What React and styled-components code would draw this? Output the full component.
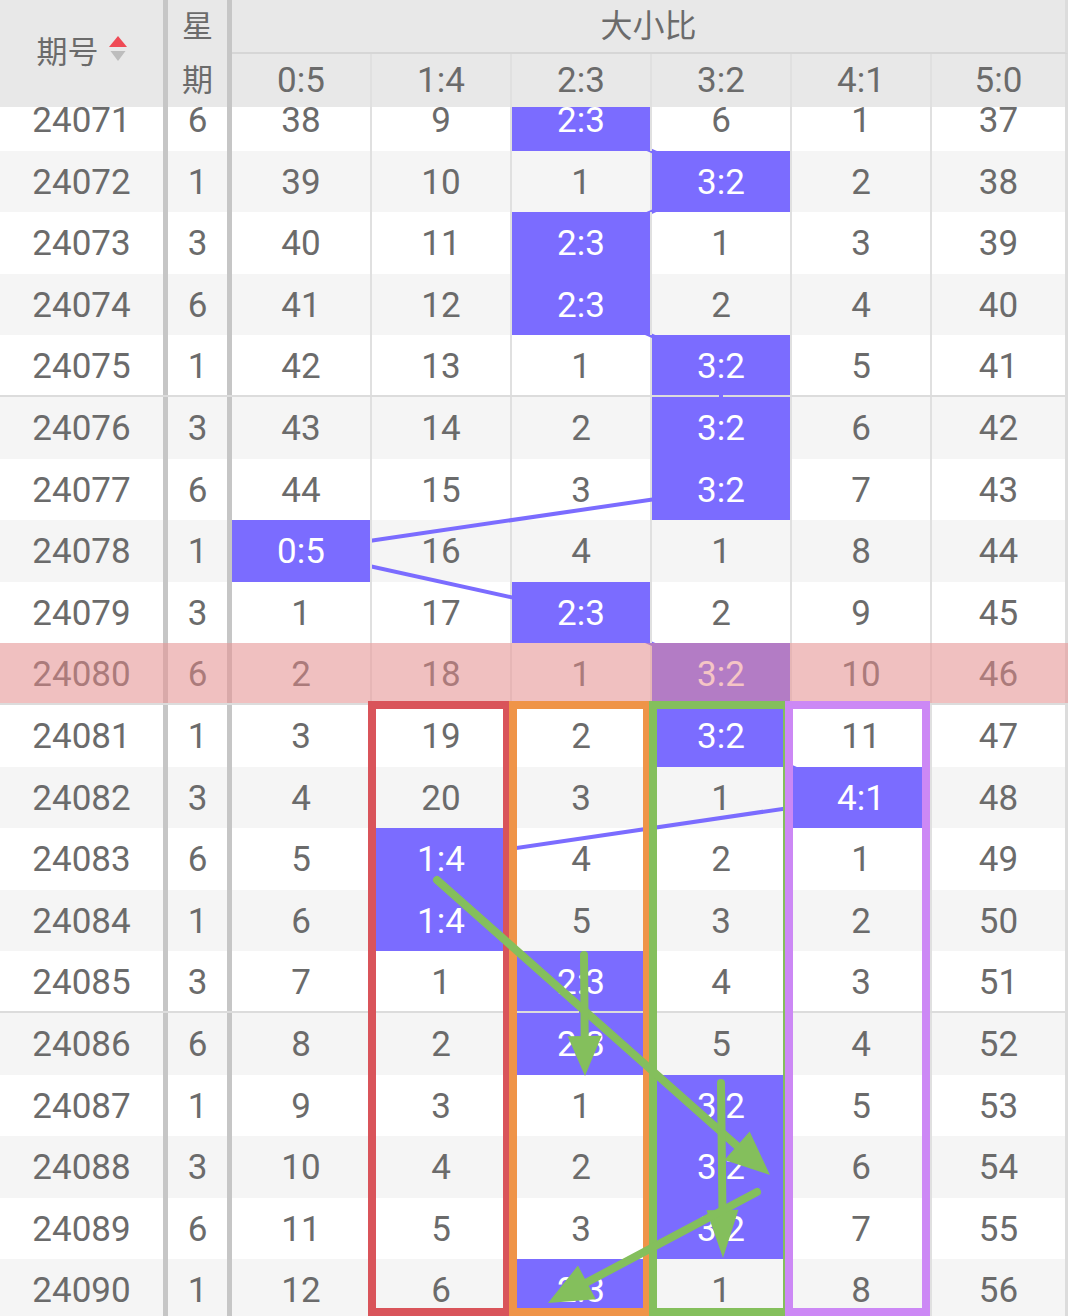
import React, { useLayoutEffect, useRef } from "react";
import styled, { createGlobalStyle, css } from "styled-components";

const GlobalStyle = createGlobalStyle`
  html, body { margin: 0; padding: 0; background: #fff; }
`;

const COLS = "168px 64px repeat(5, 140px) 136px";
const ROW_H = 61.6;
const PURPLE = "#7b6cff";
const RATIOS = ["0:5", "1:4", "2:3", "3:2", "4:1", "5:0"];

// omission counts before 24071
const START = [37, 8, 0, 5, 0, 36];
// [issue, weekday, hit column]
const DRAWS = [
  [24071, 6, 2], [24072, 1, 3], [24073, 3, 2], [24074, 6, 2], [24075, 1, 3],
  [24076, 3, 3], [24077, 6, 3], [24078, 1, 0], [24079, 3, 2], [24080, 6, 3],
  [24081, 1, 3], [24082, 3, 4], [24083, 6, 1], [24084, 1, 1], [24085, 3, 2],
  [24086, 6, 2], [24087, 1, 3], [24088, 3, 3], [24089, 6, 3], [24090, 1, 2],
];
const CURRENT = 24080;

const rows = (() => {
  let miss = [...START];
  return DRAWS.map(([no, wk, hit]) => {
    miss = miss.map((m, i) => (i === hit ? 0 : m + 1));
    return { no, wk, hit, miss };
  });
})();

const edge = (p) =>
  p.$edge === "thick" ? "5px solid #c6c6c6" : p.$edge === "last" ? "3px solid #dcdcdc" : "2px solid #e0e0e0";

const Page = styled.div`
  position: relative;
  width: 1068px;
  height: 1316px;
  overflow: hidden;
  background: #fff;
  font-family: Roboto, "Noto Sans CJK SC", sans-serif;
  color: #6b6b6b;
`;

const Scroller = styled.div`
  height: 100%;
  overflow: hidden;
`;

const Header = styled.div`
  position: sticky;
  top: 0;
  z-index: 5;
  display: grid;
  grid-template-columns: ${COLS};
  grid-template-rows: 54px 53px;
  background: #e8e8e8;
`;

const HeadCell = styled.div`
  display: flex;
  align-items: center;
  justify-content: center;
  box-sizing: border-box;
  font-size: 35px;
  border-right: ${edge};
`;

const IssueHead = styled(HeadCell)`
  grid-row: 1 / span 2;
  font-size: 31px;
  gap: 10px;
  padding-bottom: 8px;
`;

const WeekHead = styled(HeadCell)`
  grid-row: 1 / span 2;
  flex-direction: column;
  justify-content: flex-start;
  font-size: 31px;
  span {
    display: flex;
    align-items: center;
  }
  span:first-child {
    height: 48px;
  }
  span:last-child {
    height: 60px;
  }
`;

const GroupHead = styled(HeadCell)`
  grid-column: 3 / span 6;
  font-size: 32px;
  padding-bottom: 7px;
  border-bottom: 2px solid #d6d6d6;
`;

const SortIcon = styled.svg`
  display: block;
  margin-top: -2px;
`;

const Body = styled.div`
  position: relative;
  isolation: isolate;
`;

const Row = styled.div`
  position: relative;
  display: grid;
  grid-template-columns: ${COLS};
  height: ${ROW_H}px;
  box-sizing: border-box;
  background: ${(p) => (p.$alt ? "#f5f5f5" : "#fff")};
  ${(p) => p.$group && css`border-bottom: 2px solid #dcdcdc;`}
  ${(p) =>
    p.$current &&
    css`
      &::after {
        content: "";
        position: absolute;
        inset: 0;
        background: rgba(235, 139, 139, 0.5);
        z-index: 3;
        pointer-events: none;
      }
    `}
`;

const Cell = styled.div`
  display: flex;
  align-items: center;
  justify-content: center;
  box-sizing: border-box;
  padding-top: 2px;
  font-size: 35px;
  border-right: ${edge};
  ${(p) =>
    p.$hit &&
    css`
      position: relative;
      z-index: 2;
      background: ${PURPLE};
      color: #fff;
    `}
`;

const Links = styled.svg`
  position: absolute;
  top: 0;
  left: 0;
  z-index: 1;
  pointer-events: none;
`;

const Marks = styled.svg`
  position: absolute;
  top: 0;
  left: 0;
  z-index: 10;
  pointer-events: none;
`;

const colX = (i) => 301 + 140 * i;
const rowY = (r) => r * ROW_H + ROW_H / 2;

const GREEN = "#84bf5c";
const boxes = [
  { color: "#d9545a", l: 368, r: 511 },
  { color: "#ef9448", l: 509, r: 651 },
  { color: "#84bf5c", l: 649, r: 791 },
  { color: "#cc88f5", l: 785, r: 930 },
];

const arrow = (x1, y1, x2, y2, len, half) => {
  const dx = x2 - x1;
  const dy = y2 - y1;
  const d = Math.hypot(dx, dy);
  const ux = dx / d;
  const uy = dy / d;
  const bx = x2 - ux * len;
  const by = y2 - uy * len;
  return {
    line: [x1, y1, bx + ux * 2, by + uy * 2],
    head: `${x2},${y2} ${bx - uy * half},${by + ux * half} ${bx + uy * half},${by - ux * half}`,
  };
};

const arrows = [
  arrow(437, 880, 770, 1175, 44, 19),
  arrow(584, 955, 585, 1076, 40, 17),
  arrow(721, 1083, 723, 1258, 48, 16),
  arrow(757, 1192, 548, 1303, 44, 19),
];

export default function App() {
  const ref = useRef(null);
  useLayoutEffect(() => {
    if (ref.current) ref.current.scrollTop = 18;
  }, []);

  return (
    <Page>
      <GlobalStyle />
      <Scroller ref={ref}>
        <Header>
          <IssueHead $edge="thick">
            期号
            <SortIcon width="18" height="28" viewBox="0 0 18 28">
              <polygon points="9,1 18,12 0,12" fill="#ef4a55" />
              <polygon points="1.5,16 16.5,16 9,26" fill="#bdbdbd" />
            </SortIcon>
          </IssueHead>
          <WeekHead $edge="thick">
            <span>星</span>
            <span>期</span>
          </WeekHead>
          <GroupHead $edge="last">大小比</GroupHead>
          {RATIOS.map((r, i) => (
            <HeadCell key={r} $edge={i === 5 ? "last" : undefined}>
              {r}
            </HeadCell>
          ))}
        </Header>

        <Body>
          <Links width="1068" height={rows.length * ROW_H}>
            {rows.slice(1).map((row, i) => (
              <line
                key={row.no}
                x1={colX(rows[i].hit)}
                y1={rowY(i)}
                x2={colX(row.hit)}
                y2={rowY(i + 1)}
                stroke={PURPLE}
                strokeWidth="4"
              />
            ))}
          </Links>
          {rows.map((row, i) => (
            <Row key={row.no} $alt={i % 2 === 1} $group={i % 5 === 4} $current={row.no === CURRENT}>
              <Cell $edge="thick">{row.no}</Cell>
              <Cell $edge="thick">{row.wk}</Cell>
              {row.miss.map((m, c) => (
                <Cell key={c} $hit={c === row.hit} $edge={c === 5 ? "last" : undefined}>
                  {c === row.hit ? RATIOS[c] : m}
                </Cell>
              ))}
            </Row>
          ))}
        </Body>
      </Scroller>

      <Marks width="1068" height="1316" viewBox="0 0 1068 1316">
        {boxes.map((b) => (
          <rect
            key={b.color}
            x={b.l + 4}
            y={705}
            width={b.r - b.l - 8}
            height={1316 - 4 - 705}
            fill="none"
            stroke={b.color}
            strokeWidth="8"
          />
        ))}
        {arrows.map((a, i) => (
          <g key={i} fill={GREEN} stroke={GREEN}>
            <line
              x1={a.line[0]}
              y1={a.line[1]}
              x2={a.line[2]}
              y2={a.line[3]}
              strokeWidth="8"
              strokeLinecap="round"
            />
            <polygon points={a.head} stroke="none" />
          </g>
        ))}
      </Marks>
    </Page>
  );
}
